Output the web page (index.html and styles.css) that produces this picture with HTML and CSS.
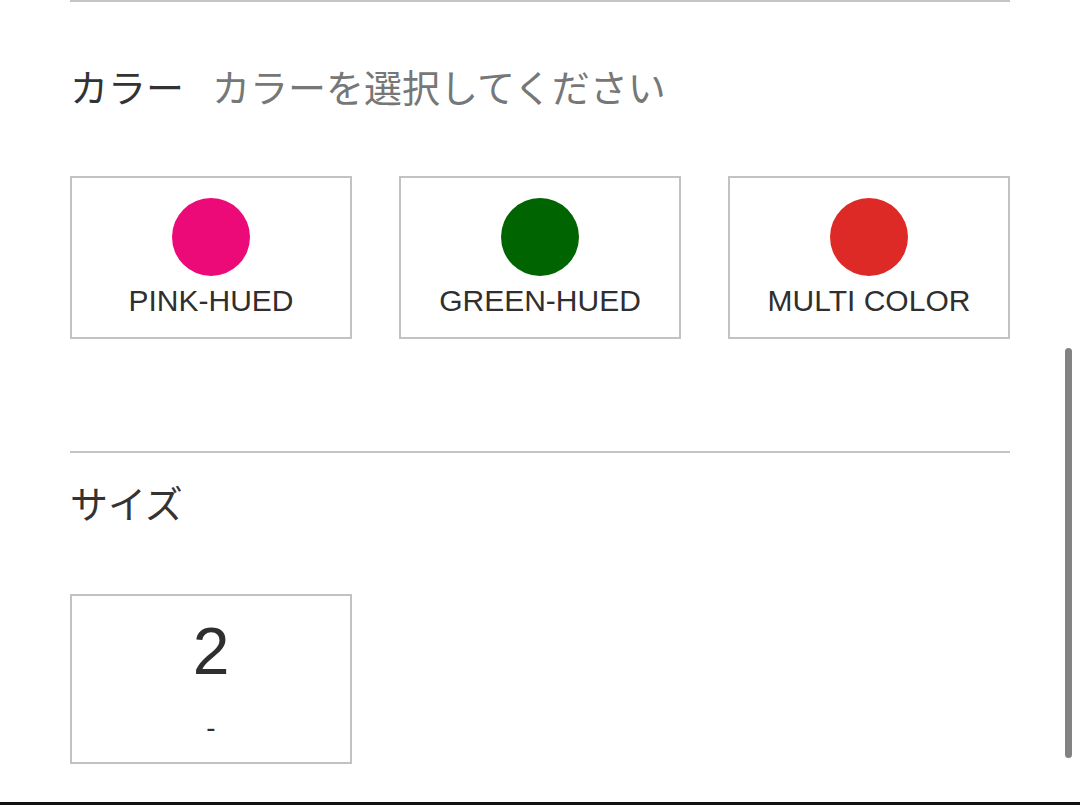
FILE: index.html
```html
<!DOCTYPE html>
<html lang="ja">
<head>
<meta charset="utf-8">
<title>カラー・サイズ選択</title>
<link rel="stylesheet" href="styles.css">
</head>
<body>
<div class="page">
  <section class="section color-section">
    <div class="heading">
      <span class="title">カラー</span>
      <span class="placeholder">カラーを選択してください</span>
    </div>
    <div class="options">
      <div class="option">
        <span class="swatch pink"></span>
        <span class="label">PINK-HUED</span>
      </div>
      <div class="option">
        <span class="swatch green"></span>
        <span class="label">GREEN-HUED</span>
      </div>
      <div class="option">
        <span class="swatch red"></span>
        <span class="label">MULTI COLOR</span>
      </div>
    </div>
  </section>
  <section class="section size-section">
    <div class="heading">
      <span class="title">サイズ</span>
    </div>
    <div class="options">
      <div class="size-option">
        <span class="size-value">2</span>
        <span class="size-note">-</span>
      </div>
    </div>
  </section>
</div>
<div class="scrollbar"></div>
<div class="bottom-bar"></div>
</body>
</html>
```
FILE: styles.css
```css
html, body {
  margin: 0;
  padding: 0;
  background: #ffffff;
}
body {
  width: 1080px;
  height: 805px;
  overflow: hidden;
  position: relative;
  font-family: "Noto Sans CJK JP", "Liberation Sans", sans-serif;
  color: #333333;
}
.page {
  padding: 0 70px;
}
.section {
  border-top: 2px solid #c4c4c4;
}
.color-section {
  padding-top: 62px;
  padding-bottom: 112px;
}
.size-section {
  padding-top: 27px;
}
.heading {
  display: flex;
  align-items: center;
  height: 44px;
  line-height: 44px;
  font-size: 38px;
}
.title {
  color: #333333;
}
.placeholder {
  color: #777777;
  margin-left: 28px;
}
.options {
  display: flex;
  gap: 47px;
  margin-top: 68px;
}
.size-section .options {
  margin-top: 70px;
}
.option {
  width: 282px;
  height: 163px;
  box-sizing: border-box;
  border: 2px solid #c2c2c2;
  display: flex;
  flex-direction: column;
  align-items: center;
  padding-top: 20px;
}
.swatch {
  width: 78px;
  height: 78px;
  border-radius: 50%;
}
.pink { background: #ec0a78; }
.green { background: #006400; }
.red { background: #dd2a26; }
.label {
  font-family: "Liberation Sans", Arial, sans-serif;
  font-size: 30px;
  line-height: 34px;
  margin-top: 8px;
  color: #2f2f2f;
}
.size-option {
  width: 282px;
  height: 170px;
  box-sizing: border-box;
  border: 2px solid #c2c2c2;
  display: flex;
  flex-direction: column;
  align-items: center;
  padding-top: 22px;
  font-family: "Liberation Sans", Arial, sans-serif;
  color: #2f2f2f;
}
.size-value {
  font-size: 66px;
  line-height: 66px;
}
.size-note {
  font-size: 28px;
  line-height: 30px;
  margin-top: 29px;
}
.scrollbar {
  position: absolute;
  left: 1065px;
  top: 348px;
  width: 7px;
  height: 410px;
  border-radius: 4px;
  background: #828282;
}
.bottom-bar {
  position: absolute;
  left: 0;
  bottom: 0;
  width: 1080px;
  height: 3px;
  background: #111111;
}
```
